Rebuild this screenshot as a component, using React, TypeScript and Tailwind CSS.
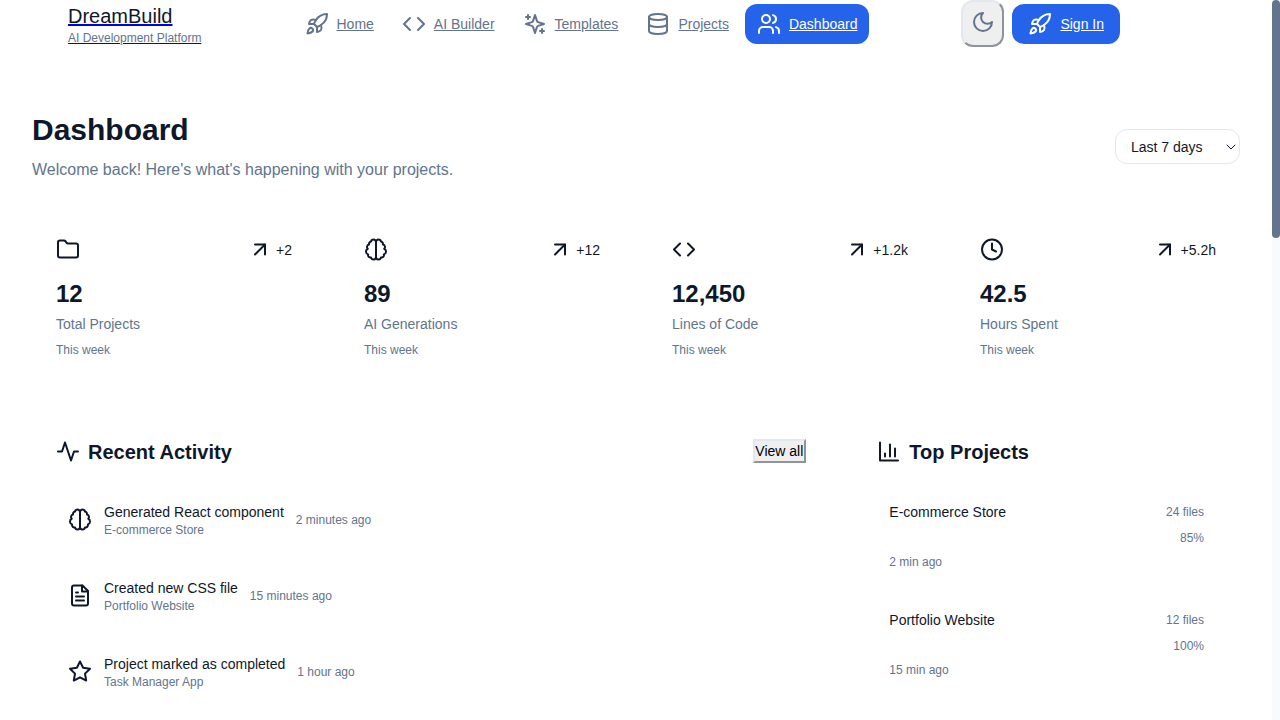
import type { ReactNode } from "react";

type IconName =
  | "rocket" | "code" | "sparkles" | "database" | "users" | "moon" | "folder" | "arrow"
  | "brain" | "clock" | "activity" | "chart" | "file" | "star";

const shapes: Record<IconName, ReactNode> = {
  rocket: (
    <>
      <path d="M4.5 16.5c-1.5 1.26-2 5-2 5s3.74-.5 5-2c.71-.84.7-2.13-.09-2.91a2.18 2.18 0 0 0-2.91-.09z" />
      <path d="m12 15-3-3a22 22 0 0 1 2-3.95A12.88 12.88 0 0 1 22 2c0 2.72-.78 7.5-6 11a22.35 22.35 0 0 1-4 2z" />
      <path d="M9 12H4s.55-3.03 2-4c1.62-1.08 5 0 5 0" />
      <path d="M12 15v5s3.03-.55 4-2c1.08-1.62 0-5 0-5" />
    </>
  ),
  code: (
    <>
      <polyline points="16 18 22 12 16 6" />
      <polyline points="8 6 2 12 8 18" />
    </>
  ),
  sparkles: (
    <>
      <path d="m12 3-1.912 5.813a2 2 0 0 1-1.275 1.275L3 12l5.813 1.912a2 2 0 0 1 1.275 1.275L12 21l1.912-5.813a2 2 0 0 1 1.275-1.275L21 12l-5.813-1.912a2 2 0 0 1-1.275-1.275L12 3Z" />
      <path d="M5 3v4" />
      <path d="M19 17v4" />
      <path d="M3 5h4" />
      <path d="M17 19h4" />
    </>
  ),
  database: (
    <>
      <ellipse cx="12" cy="5" rx="9" ry="3" />
      <path d="M3 5V19A9 3 0 0 0 21 19V5" />
      <path d="M3 12A9 3 0 0 0 21 12" />
    </>
  ),
  users: (
    <>
      <path d="M16 21v-2a4 4 0 0 0-4-4H6a4 4 0 0 0-4 4v2" />
      <circle cx="9" cy="7" r="4" />
      <path d="M22 21v-2a4 4 0 0 0-3-3.87" />
      <path d="M16 3.13a4 4 0 0 1 0 7.75" />
    </>
  ),
  moon: <path d="M12 3a6 6 0 0 0 9 9 9 9 0 1 1-9-9Z" />,
  folder: (
    <path d="M4 20h16a2 2 0 0 0 2-2V8a2 2 0 0 0-2-2h-7.93a2 2 0 0 1-1.66-.9l-.82-1.2A2 2 0 0 0 7.93 3H4a2 2 0 0 0-2 2v13c0 1.1.9 2 2 2Z" />
  ),
  arrow: (
    <>
      <path d="M7 7h10v10" />
      <path d="M7 17 17 7" />
    </>
  ),
  brain: (
    <>
      <path d="M9.5 2A2.5 2.5 0 0 1 12 4.5v15a2.5 2.5 0 0 1-4.96.44 2.5 2.5 0 0 1-2.96-3.08 3 3 0 0 1-.34-5.58 2.5 2.5 0 0 1 1.32-4.24 2.5 2.5 0 0 1 1.98-3A2.5 2.5 0 0 1 9.5 2Z" />
      <path d="M14.5 2A2.5 2.5 0 0 0 12 4.5v15a2.5 2.5 0 0 0 4.96.44 2.5 2.5 0 0 0 2.96-3.08 3 3 0 0 0 .34-5.58 2.5 2.5 0 0 0-1.32-4.24 2.5 2.5 0 0 0-1.98-3A2.5 2.5 0 0 0 14.5 2Z" />
    </>
  ),
  clock: (
    <>
      <circle cx="12" cy="12" r="10" />
      <polyline points="12 6 12 12 16 14" />
    </>
  ),
  activity: <path d="M22 12h-4l-3 9L9 3l-3 9H2" />,
  chart: (
    <>
      <path d="M3 3v18h18" />
      <path d="M18 17V9" />
      <path d="M13 17V5" />
      <path d="M8 17v-3" />
    </>
  ),
  file: (
    <>
      <path d="M14.5 2H6a2 2 0 0 0-2 2v16a2 2 0 0 0 2 2h12a2 2 0 0 0 2-2V7.5L14.5 2z" />
      <polyline points="14 2 14 8 20 8" />
      <path d="M16 13H8" />
      <path d="M16 17H8" />
      <path d="M10 9H8" />
    </>
  ),
  star: (
    <polygon points="12 2 15.09 8.26 22 9.27 17 14.14 18.18 21.02 12 17.77 5.82 21.02 7 14.14 2 9.27 8.91 8.26 12 2" />
  ),
};

function Icon({ name, className = "size-6 shrink-0" }: { name: IconName; className?: string }) {
  return (
    <svg
      className={className}
      viewBox="0 0 24 24"
      fill="none"
      stroke="currentColor"
      strokeWidth="2"
      strokeLinecap="round"
      strokeLinejoin="round"
    >
      {shapes[name]}
    </svg>
  );
}

const raised = "size-6 shrink-0 -translate-y-[0.5px]";

const nav: { icon: IconName; label: string; active?: boolean }[] = [
  { icon: "rocket", label: "Home" },
  { icon: "code", label: "AI Builder" },
  { icon: "sparkles", label: "Templates" },
  { icon: "database", label: "Projects" },
  { icon: "users", label: "Dashboard", active: true },
];

const stats: { icon: IconName; change: string; value: string; label: string }[] = [
  { icon: "folder", change: "+2", value: "12", label: "Total Projects" },
  { icon: "brain", change: "+12", value: "89", label: "AI Generations" },
  { icon: "code", change: "+1.2k", value: "12,450", label: "Lines of Code" },
  { icon: "clock", change: "+5.2h", value: "42.5", label: "Hours Spent" },
];

const activities: { icon: IconName; title: string; project: string; time: string }[] = [
  { icon: "brain", title: "Generated React component", project: "E-commerce Store", time: "2 minutes ago" },
  { icon: "file", title: "Created new CSS file", project: "Portfolio Website", time: "15 minutes ago" },
  { icon: "star", title: "Project marked as completed", project: "Task Manager App", time: "1 hour ago" },
];

const projects = [
  { name: "E-commerce Store", files: "24 files", progress: "85%", time: "2 min ago" },
  { name: "Portfolio Website", files: "12 files", progress: "100%", time: "15 min ago" },
];

function Header() {
  return (
    <header className="flex h-12 items-start pl-[68px]">
      <a href="#" className="flex w-[224.5px] flex-col items-start pt-0.5">
        <span className="text-xl leading-7 text-slate-900 underline decoration-[#0000ee] decoration-2 underline-offset-1">
          DreamBuild
        </span>
        <span className="text-xs leading-4 text-slate-500 underline decoration-[#0000ee] decoration-1 underline-offset-1">
          AI Development Platform
        </span>
      </a>
      <nav className="flex gap-1 pt-1">
        {nav.map((n) => (
          <a
            key={n.label}
            href="#"
            className={
              n.active
                ? "flex h-10 items-center gap-2 rounded-xl bg-[#2563eb] px-3 text-sm text-white underline"
                : "flex h-10 items-center gap-2 rounded-xl px-3 text-sm text-slate-500 underline"
            }
          >
            <Icon name={n.icon} />
            {n.label}
          </a>
        ))}
      </nav>
      <div className="mr-[152px] ml-auto flex items-start gap-2">
        <button className="flex h-[47px] w-[43px] justify-center rounded-xl border-2 border-t-slate-200 border-r-[#8f949b] border-b-[#8f949b] border-l-slate-200 bg-[#efefef] pt-2 text-slate-500">
          <Icon name="moon" />
        </button>
        <a
          href="#"
          className="mt-1 flex h-10 items-center gap-2 rounded-xl bg-[#2563eb] px-4 text-sm text-white underline"
        >
          <Icon name="rocket" />
          Sign In
        </a>
      </div>
    </header>
  );
}

export default function App() {
  return (
    <div className="flex h-[720px] overflow-hidden bg-white font-['Liberation_Sans',Arial,sans-serif] text-slate-900">
      <div className="w-[1272px]">
        <Header />
        <main className="px-8 pt-16">
          <div className="flex items-center justify-between">
            <div>
              <h1 className="text-3xl font-bold">Dashboard</h1>
              <p className="mt-2.5 text-base text-slate-500">
                Welcome back! Here's what's happening with your projects.
              </p>
            </div>
            <div className="relative -mt-px">
              <select className="h-[35px] w-[125px] appearance-none rounded-xl border border-slate-200 bg-white pl-[15px] text-sm">
                <option>Last 7 days</option>
                <option>Last 30 days</option>
              </select>
              <svg
                className="pointer-events-none absolute top-[15px] right-1 h-[6px] w-[10px]"
                viewBox="0 0 10 6"
                fill="none"
                stroke="currentColor"
              >
                <path d="M.75.75 5 5 9.25.75" />
              </svg>
            </div>
          </div>

          <div className="mt-8 grid grid-cols-4 gap-6">
            {stats.map((s) => (
              <div key={s.label} className="p-6">
                <div className="flex items-center justify-between">
                  <Icon name={s.icon} className={raised} />
                  <div className="flex items-center gap-1 text-sm">
                    <Icon name="arrow" className={raised} />
                    {s.change}
                  </div>
                </div>
                <div className="mt-4 text-2xl font-bold">{s.value}</div>
                <div className="mt-1 text-sm text-slate-500">{s.label}</div>
                <div className="mt-2 text-xs text-slate-500">This week</div>
              </div>
            ))}
          </div>

          <div className="mt-8 grid grid-cols-3 gap-6">
            <section className="col-span-2 p-6">
              <div className="flex h-7 items-center justify-between">
                <h2 className="flex items-center gap-2 text-xl font-bold">
                  <Icon name="activity" className={raised} />
                  Recent Activity
                </h2>
                <button className="-mt-0.5 -mr-px h-6 w-[53px] border-2 border-t-slate-200 border-r-[#8f949b] border-b-[#8f949b] border-l-slate-200 bg-[#efefef] pr-px text-sm leading-5 whitespace-nowrap text-black">
                  View all
                </button>
              </div>
              <div className="mt-6 flex flex-col gap-4">
                {activities.map((a) => (
                  <div key={a.title} className="flex items-center gap-3 p-3">
                    <Icon name={a.icon} className={raised} />
                    <div>
                      <div className="text-sm">{a.title}</div>
                      <div className="text-xs text-slate-500">{a.project}</div>
                    </div>
                    <div className="text-xs text-slate-500">{a.time}</div>
                  </div>
                ))}
              </div>
            </section>
            <section className="p-6">
              <h2 className="flex items-center gap-2 text-xl font-bold">
                <Icon name="chart" className={raised} />
                Top Projects
              </h2>
              <div className="mt-6 flex flex-col gap-4">
                {projects.map((p) => (
                  <div key={p.name} className="p-3 text-xs text-slate-500">
                    <div className="flex items-center justify-between">
                      <span className="text-sm text-slate-900">{p.name}</span>
                      <span>{p.files}</span>
                    </div>
                    <div className="mt-2 text-right">{p.progress}</div>
                    <div className="mt-2">{p.time}</div>
                  </div>
                ))}
              </div>
            </section>
          </div>
        </main>
      </div>
      <div className="h-full w-2 bg-slate-50">
        <div className="h-[238px] rounded bg-slate-500" />
      </div>
    </div>
  );
}
